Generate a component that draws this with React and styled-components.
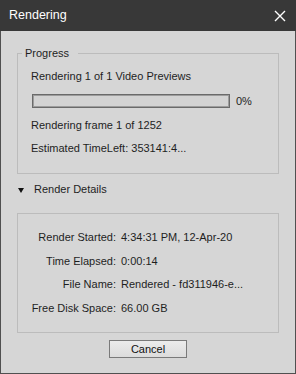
import React from "react";
import styled, { createGlobalStyle } from "styled-components";

const Global = createGlobalStyle`
  html, body { margin: 0; padding: 0; background: #d6d6d6; }
  body { font-family: "Liberation Sans", Arial, sans-serif; }
  * { box-sizing: border-box; }
`;

const Window = styled.div`
  width: 296px;
  height: 374px;
  display: flex;
  flex-direction: column;
  background: #d6d6d6;
  border: 1px solid #505050;
  border-top: none;
  color: #1e1e1e;
  font-size: 11px;
  line-height: 13px;
`;

const TitleBar = styled.div`
  height: 31px;
  margin: 0 -1px;
  background: #383838;
  color: #ffffff;
  display: flex;
  align-items: center;
  justify-content: space-between;
  padding: 0 10px 0 9px;
  font-size: 12.5px;
  flex-shrink: 0;
`;

const CloseButton = styled.button`
  border: none;
  background: transparent;
  padding: 0;
  width: 12px;
  height: 12px;
  display: flex;
  cursor: pointer;
`;

const Body = styled.div`
  flex: 1;
  display: flex;
  flex-direction: column;
  padding: 22px 16px 0 16px;
`;

const Group = styled.div`
  position: relative;
  border: 1px solid #bcbcbc;
  padding: ${(p) => p.$pad};
  display: flex;
  flex-direction: column;
  gap: ${(p) => p.$gap};
`;

const Legend = styled.span`
  position: absolute;
  top: -7px;
  left: 4px;
  padding: 0 9px 0 3px;
  background: #d6d6d6;
`;

const Line = styled.div`
  white-space: nowrap;
  margin-top: ${(p) => p.$shift || 0};
`;

const BarRow = styled.div`
  display: flex;
  align-items: center;
  gap: 6px;
  margin-left: 1px;
`;

const Bar = styled.div`
  width: 198px;
  height: 14px;
  border: 1px solid #6a6a6a;
  box-shadow: inset 0 0 0 1px #9c9c9c;
  background: #d3d3d3;
`;

const Toggle = styled.div`
  display: flex;
  align-items: center;
  gap: 10px;
  margin: 9px 0 17px 1px;
`;

const Triangle = styled.span`
  width: 0;
  height: 0;
  border-left: 3.5px solid transparent;
  border-right: 3.5px solid transparent;
  border-top: 5px solid #111;
  margin-top: 2px;
`;

const Grid = styled.div`
  display: grid;
  grid-template-columns: 98px 1fr;
  column-gap: 5px;
  row-gap: 10.5px;
`;

const Label = styled.div`
  text-align: right;
  white-space: nowrap;
`;

const Value = styled.div`
  white-space: nowrap;
`;

const Footer = styled.div`
  display: flex;
  justify-content: center;
  padding-top: 7px;
`;

const Button = styled.button`
  width: 78px;
  height: 18px;
  border: 1px solid #7a7a7a;
  background: linear-gradient(#ececec, #dcdcdc);
  font-family: inherit;
  font-size: 11px;
  color: #111;
  padding: 0;
`;

export default function App() {
  return (
    <>
      <Global />
      <Window>
        <TitleBar>
          <span>Rendering</span>
          <CloseButton aria-label="Close">
            <svg width="12" height="12" viewBox="0 0 12 12">
              <path d="M1 1L11 11M11 1L1 11" stroke="#fff" strokeWidth="1.4" />
            </svg>
          </CloseButton>
        </TitleBar>
        <Body>
          <Group $pad="16px 13px 18px 13px" $gap="11px">
            <Legend>Progress</Legend>
            <Line>Rendering 1 of 1 Video Previews</Line>
            <BarRow>
              <Bar />
              <span>0%</span>
            </BarRow>
            <Line>Rendering frame 1 of 1252</Line>
            <Line $shift="-1px">Estimated TimeLeft: 353141:4...</Line>
          </Group>
          <Toggle>
            <Triangle />
            <span>Render Details</span>
          </Toggle>
          <Group $pad="17px 0 17px 0" $gap="0">
            <Grid>
              <Label>Render Started:</Label>
              <Value>4:34:31 PM, 12-Apr-20</Value>
              <Label>Time Elapsed:</Label>
              <Value>0:00:14</Value>
              <Label>File Name:</Label>
              <Value>Rendered - fd311946-e...</Value>
              <Label>Free Disk Space:</Label>
              <Value>66.00 GB</Value>
            </Grid>
          </Group>
          <Footer>
            <Button>Cancel</Button>
          </Footer>
        </Body>
      </Window>
    </>
  );
}
